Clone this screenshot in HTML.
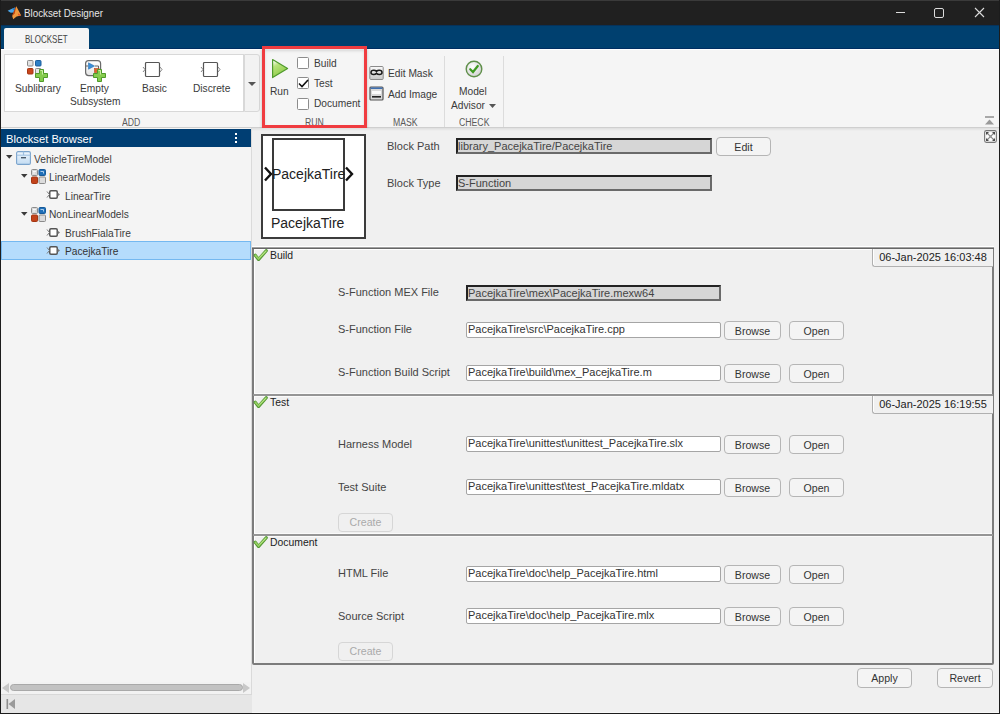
<!DOCTYPE html>
<html><head><meta charset="utf-8">
<style>
*{box-sizing:border-box;margin:0;padding:0}
html,body{width:1000px;height:714px;overflow:hidden;background:#1c1c1c}
body{position:relative;font-family:"Liberation Sans",sans-serif;color:#333}
.a{position:absolute}
.t{position:absolute;white-space:pre;line-height:1}
#title{left:1px;top:0;width:998px;height:25px;background:#202020;border-top:1px solid #3a3a3a}
#tabs{left:1px;top:25px;width:998px;height:24px;background:#00406f;border-top:1px solid #06325a;border-bottom:1px solid #002e62}
#tab{left:4px;top:28px;width:85px;height:21px;background:#f5f5f5;border-radius:2px 2px 0 0}
#ribbon{left:1px;top:49px;width:998px;height:79px;background:#f5f5f5;border-top:1px solid #fff;border-bottom:1px solid #cfcfcf}
.rl{font-size:10px;color:#5a5a5a;transform:scaleX(0.87);transform-origin:0 0}
.rt{font-size:10.2px;color:#3a3a3a}
#addpanel{left:4px;top:54px;width:240px;height:58px;background:#fff;border:1px solid #d8d8d8}
#adddrop{left:244px;top:54px;width:16px;height:58px;background:#f2f2f2;border:1px solid #d8d8d8;border-radius:0 3px 3px 0}
.vsep{width:1px;background:#dcdcdc}
#redbox{left:262px;top:46px;width:105px;height:82px;border:3px solid #f03c40;box-shadow:inset 0 2px 3px rgba(0,0,0,0.12),0 3px 3px rgba(0,0,0,0.22)}
.cb{width:12px;height:12px;background:#fff;border:1px solid #8c8c8c;border-radius:1.5px}
#browser{left:1px;top:128px;width:251px;height:585px;background:#f4f4f4;border-right:1px solid #dadada}
#bhdr{left:1px;top:129px;width:250px;height:18px;background:#003e73;color:#fff}
#right{left:252px;top:128px;width:747px;height:585px;background:#f0f0f0;border-bottom:1px solid #f8f8f8}
.lbl{font-size:11px;color:#444}
.fld{height:16px;background:#fff;border:1px solid #a5a5a5;border-radius:2px;font-size:11px;line-height:12px;color:#333;padding:0 0 0 1px;white-space:pre;overflow:hidden}
.fldg{height:16px;background:#d6d6d6;border:2px solid #222;border-right-color:#6a6a6a;border-bottom-color:#6a6a6a;font-size:11px;line-height:12px;color:#444;padding:0 0 0 0;white-space:pre;overflow:hidden}
.btn{height:19px;background:#f4f4f4;border:1px solid #b5b5b5;border-radius:4px;font-size:10.6px;color:#333;text-align:center;padding-top:3px}
.sec{border:2px solid #8c8c8c;border-right-width:2px;}
.ts{height:18px;background:#f0f0f0;border:1px solid #b0b0b0;border-right:none;border-top:none;border-radius:0 0 0 3px;box-shadow:inset 1px 0 0 #fff;font-size:11px;color:#222;text-align:center;padding-top:2px}
</style></head><body>

<!-- title bar -->
<div id="title" class="a"></div>
<svg class="a" style="left:4px;top:3px" width="20" height="20" viewBox="0 0 20 20">
  <path d="M3.6 7.8L8 5.8L11 4.6L9.5 9.6L6.8 9.8Z" fill="#4ca6e8"/>
  <path d="M8 5.8L11 4.6L10 7.5Z" fill="#2a78c0"/>
  <path d="M12.3 3.2L17.2 12.6L12.6 13.6L9.2 16.2L8.2 13L9.5 9.6Z" fill="#f0983c"/>
  <path d="M12.3 3.2L9.5 9.6L8.2 13L10.6 10.5Z" fill="#b83a12"/>
  <path d="M13.8 10.2L17.2 12.6L14.5 12.5Z" fill="#e24a2a"/>
</svg>
<div class="t" style="left:24px;top:8px;font-size:11px;color:#e6e6e6;transform:scaleX(0.89);transform-origin:0 0">Blockset Designer</div>
<div class="a" style="left:896px;top:12px;width:9px;height:1px;background:#dcdcdc"></div>
<div class="a" style="left:934px;top:8px;width:10px;height:10px;border:1px solid #dcdcdc;border-radius:2px"></div>
<svg class="a" style="left:974px;top:7px" width="11" height="11" viewBox="0 0 11 11"><path d="M1 1L10 10M10 1L1 10" stroke="#dcdcdc" stroke-width="1.1"/></svg>

<!-- tabs -->
<div id="tabs" class="a"></div>
<div id="tab" class="a"></div>
<div class="t" style="left:25px;top:34px;font-size:10.5px;color:#444;transform:scaleX(0.76);transform-origin:0 0">BLOCKSET</div>

<!-- ribbon -->
<div id="ribbon" class="a"></div>
<div id="addpanel" class="a"></div>
<div id="adddrop" class="a"></div>
<svg class="a" style="left:248px;top:82px" width="9" height="5"><path d="M0 0H8L4 4Z" fill="#555"/></svg>

<!-- sublibrary icon -->
<svg class="a" style="left:20px;top:55px" width="90" height="30" viewBox="0 0 90 30">
  <rect x="7.5" y="5.5" width="5.5" height="5.5" rx="0.8" fill="#e2e2e2" stroke="#8a8a8a"/>
  <rect x="15.5" y="5.5" width="5.5" height="5.5" rx="0.8" fill="#2d7fc6" stroke="#1d5f9c"/>
  <rect x="7.5" y="13.5" width="5.5" height="5.5" rx="0.8" fill="#c8461c" stroke="#a63512"/>
  <rect x="15.5" y="13.5" width="5.5" height="5.5" rx="0.8" fill="#e6e6e6" stroke="#8a8a8a"/>
  <path d="M19.5 14.5h4v4h4v4h-4v4h-4v-4h-4v-4h4z" fill="#86cc4e" stroke="#4f9a2a" stroke-width="1"/><path d="M20.5 15.5h2v4" stroke="#d4f0b0" stroke-width="0.9" fill="none"/>
  <defs><linearGradient id="es" x1="0" y1="0" x2="0" y2="1"><stop offset="0" stop-color="#fff"/><stop offset="1" stop-color="#e4e4e4"/></linearGradient></defs>
  <rect x="65.6" y="5.6" width="15" height="15" rx="3" fill="url(#es)" stroke="#6a6a6a" stroke-width="1.2"/>
  <path d="M68.5 7.8L74.5 11L68.5 14.2Z" fill="#3b8fd8" stroke="#2a6fb0" stroke-width="0.6"/>
  <path d="M66 11h2M75 11h3.5v3" fill="none" stroke="#555" stroke-width="0.9"/>
  <rect x="74.5" y="13.5" width="4.5" height="4" fill="#e0622c" stroke="#b84a1a" stroke-width="0.6"/>
  <path d="M77.5 14.5h4v4h4v4h-4v4h-4v-4h-4v-4h4z" fill="#86cc4e" stroke="#4f9a2a" stroke-width="1"/><path d="M78.5 15.5h2v4" stroke="#d4f0b0" stroke-width="0.9" fill="none"/>
</svg>
<div class="t rt" style="left:15px;top:84px">Sublibrary</div>
<div class="t rt" style="left:80px;top:84px">Empty</div>
<div class="t rt" style="left:70px;top:97px">Subsystem</div>
<!-- basic -->
<svg class="a" style="left:141px;top:61px" width="22" height="17" viewBox="0 0 22 17">
  <rect x="4.5" y="1.5" width="14" height="14" rx="1" fill="#fff" stroke="#555" stroke-width="1.2"/>
  <path d="M2 6L4 8.5L2 11M19 6L21 8.5L19 11" fill="none" stroke="#777" stroke-width="0.9"/>
</svg>
<div class="t rt" style="left:142px;top:84px">Basic</div>
<svg class="a" style="left:199px;top:61px" width="22" height="17" viewBox="0 0 22 17">
  <rect x="4.5" y="1.5" width="14" height="14" rx="1" fill="#fff" stroke="#555" stroke-width="1.2"/>
  <path d="M2 6L4 8.5L2 11M19 6L21 8.5L19 11" fill="none" stroke="#777" stroke-width="0.9"/>
</svg>
<div class="t rt" style="left:193px;top:84px">Discrete</div>
<div class="t rl" style="left:122px;top:118px">ADD</div>

<!-- RUN section -->
<svg class="a" style="left:271px;top:58px" width="19" height="22" viewBox="0 0 19 22">
  <defs><linearGradient id="gr" x1="0.1" y1="0.1" x2="0.5" y2="0.9"><stop offset="0" stop-color="#f4f8e8"/><stop offset="0.3" stop-color="#b8e27a"/><stop offset="1" stop-color="#8fcc4a"/></linearGradient></defs>
  <path d="M1.6 1.6 L16.6 10.5 L1.6 19.6Z" fill="url(#gr)" stroke="#4f9a2c" stroke-width="1.2" stroke-linejoin="round"/>
</svg>
<div class="t rt" style="left:270px;top:87px">Run</div>
<div class="a cb" style="left:297px;top:57px"></div>
<div class="a cb" style="left:297px;top:77px"></div>
<svg class="a" style="left:298px;top:79px" width="11" height="9"><path d="M1 4.5L4 7.5L10 1" fill="none" stroke="#111" stroke-width="1.6"/></svg>
<div class="a cb" style="left:297px;top:98px"></div>
<div class="t rt" style="left:314px;top:59px">Build</div>
<div class="t rt" style="left:314px;top:79px">Test</div>
<div class="t rt" style="left:314px;top:99px">Document</div>
<div class="t rl" style="left:305px;top:118px">RUN</div>
<div id="redbox" class="a"></div>

<!-- MASK -->
<svg class="a" style="left:369px;top:66px" width="15" height="14" viewBox="0 0 15 14">
  <defs><linearGradient id="em" x1="0" y1="0" x2="0" y2="1"><stop offset="0" stop-color="#fafafa"/><stop offset="1" stop-color="#c8c8c8"/></linearGradient></defs>
  <rect x="0.8" y="0.5" width="13.4" height="13" rx="1" fill="url(#em)" stroke="#8a8a8a" stroke-width="1"/>
  <path d="M2 6.5Q2 4.3 4.8 4.3Q6.4 4.3 7.5 5.4Q8.6 4.3 10.2 4.3Q13 4.3 13 6.5Q13 8.5 10.4 8.5Q8.6 8.5 7.5 7.4Q6.4 8.5 4.6 8.5Q2 8.5 2 6.5Z" fill="none" stroke="#1a1a1a" stroke-width="1.5"/>
</svg>
<div class="t rt" style="left:388px;top:69px">Edit Mask</div>
<svg class="a" style="left:369px;top:86px" width="15" height="15" viewBox="0 0 15 15">
  <rect x="1" y="1" width="13" height="13" rx="1" fill="#d8d8d8" stroke="#555" stroke-width="1.2"/>
  <rect x="1.5" y="1.4" width="12" height="1.6" fill="#3f6fb0"/>
  <rect x="3" y="5" width="9" height="3" fill="#fafafa"/>
  <rect x="3" y="10" width="9" height="1.6" fill="#222"/>
</svg>
<div class="t rt" style="left:388px;top:90px">Add Image</div>
<div class="t rl" style="left:393px;top:118px">MASK</div>
<div class="a vsep" style="left:444px;top:56px;height:71px"></div>

<!-- CHECK -->
<svg class="a" style="left:465px;top:60px" width="18" height="18" viewBox="0 0 18 18">
  <defs><radialGradient id="ma" cx="0.4" cy="0.35" r="0.7"><stop offset="0" stop-color="#ffffff"/><stop offset="1" stop-color="#cfcfcf"/></radialGradient></defs>
  <circle cx="9" cy="9" r="7.8" fill="url(#ma)" stroke="#5f8f4a" stroke-width="1.4"/>
  <path d="M5.2 9.2L8 12L12.8 6" fill="none" stroke="#3f9a22" stroke-width="2.2" stroke-linecap="round"/>
</svg>
<div class="t rt" style="left:459px;top:87px">Model</div>
<div class="t rt" style="left:451px;top:101px">Advisor</div>
<svg class="a" style="left:489px;top:104px" width="8" height="5"><path d="M0 0H7L3.5 4Z" fill="#555"/></svg>
<div class="t rl" style="left:459px;top:118px">CHECK</div>
<div class="a vsep" style="left:503px;top:56px;height:71px"></div>

<!-- collapse ribbon -->
<div class="a" style="left:985px;top:116px;width:9px;height:2px;background:#a8a8a8"></div>
<svg class="a" style="left:985px;top:119px" width="10" height="6"><path d="M0 5.5L4.5 0.5L9 5.5Z" fill="#9a9a9a"/></svg>

<!-- browser -->
<div id="browser" class="a"></div>
<div id="bhdr" class="a"></div>
<div class="t" style="left:6px;top:134px;font-size:11.2px;color:#fff">Blockset Browser</div>
<div class="a" style="left:235px;top:133px;width:2px;height:2px;background:#fff"></div>
<div class="a" style="left:235px;top:137px;width:2px;height:2px;background:#fff"></div>
<div class="a" style="left:235px;top:141px;width:2px;height:2px;background:#fff"></div>

<!-- tree -->
<svg class="a" style="left:6px;top:155px" width="7" height="4" viewBox="0 0 7 4"><path d="M0 0H6.5L3.25 3.8Z" fill="#3a3a3a"/></svg>
<svg class="a" style="left:16px;top:151px" width="15" height="14" viewBox="0 0 15 14">
  <defs><linearGradient id="bx" x1="0" y1="0" x2="0" y2="1"><stop offset="0" stop-color="#eef6fd"/><stop offset="1" stop-color="#c3dcf2"/></linearGradient></defs>
  <rect x="0.6" y="0.6" width="13.8" height="12.8" rx="1.5" fill="url(#bx)" stroke="#7aa3cc" stroke-width="1.1"/>
  <path d="M0.6 4.2H14.4" stroke="#9dbfe0" stroke-width="1"/>
  <path d="M7.5 0.6V4" stroke="#9dbfe0" stroke-width="1.2"/>
  <rect x="5" y="6" width="5" height="1.4" fill="#4a5a6a"/>
</svg>
<div class="t" style="left:34px;top:155px;font-size:10.2px;color:#3c3c3c">VehicleTireModel</div>
<svg class="a" style="left:21px;top:174px" width="7" height="4" viewBox="0 0 7 4"><path d="M0 0H6.5L3.25 3.8Z" fill="#3a3a3a"/></svg>
<svg class="a" style="left:31px;top:169px" width="15" height="15" viewBox="0 0 15 15">
  <rect x="0.5" y="0.5" width="6" height="6" rx="1" fill="#d9d9d9" stroke="#8c8c8c"/>
  <rect x="8" y="0.5" width="6.5" height="6" rx="1" fill="#1f6fb8" stroke="#175a99"/>
  <rect x="0.5" y="8" width="6" height="6.5" rx="1" fill="#c2421a" stroke="#a33612"/>
  <rect x="8" y="8" width="6.5" height="6.5" rx="1" fill="#dcdcdc" stroke="#8c8c8c"/>
  <path d="M2 2.5h3M2 4h2" stroke="#fff" stroke-width="0.8"/>
  <path d="M9.5 2.5h3v2" stroke="#cfe4f7" stroke-width="0.8" fill="none"/>
</svg>
<div class="t" style="left:49px;top:173px;font-size:10.2px;color:#3c3c3c">LinearModels</div>
<svg class="a" style="left:46px;top:190px" width="16" height="10" viewBox="0 0 16 10">
  <rect x="3.75" y="0.75" width="7.5" height="7.5" rx="1.2" fill="#fff" stroke="#555" stroke-width="1.5"/>
  <path d="M1 1.5L3.5 4.5L1 7.5" fill="none" stroke="#777" stroke-width="1"/>
  <path d="M11.5 2.5L14 4.5L11.5 6.5Z" fill="#777"/>
</svg>
<div class="t" style="left:65px;top:192px;font-size:10.2px;color:#3c3c3c">LinearTire</div>
<svg class="a" style="left:21px;top:212px" width="7" height="4" viewBox="0 0 7 4"><path d="M0 0H6.5L3.25 3.8Z" fill="#3a3a3a"/></svg>
<svg class="a" style="left:31px;top:207px" width="15" height="15" viewBox="0 0 15 15">
  <rect x="0.5" y="0.5" width="6" height="6" rx="1" fill="#d9d9d9" stroke="#8c8c8c"/>
  <rect x="8" y="0.5" width="6.5" height="6" rx="1" fill="#1f6fb8" stroke="#175a99"/>
  <rect x="0.5" y="8" width="6" height="6.5" rx="1" fill="#c2421a" stroke="#a33612"/>
  <rect x="8" y="8" width="6.5" height="6.5" rx="1" fill="#dcdcdc" stroke="#8c8c8c"/>
  <path d="M2 2.5h3M2 4h2" stroke="#fff" stroke-width="0.8"/>
  <path d="M9.5 2.5h3v2" stroke="#cfe4f7" stroke-width="0.8" fill="none"/>
</svg>
<div class="t" style="left:49px;top:210px;font-size:10.2px;color:#3c3c3c">NonLinearModels</div>
<svg class="a" style="left:46px;top:228px" width="16" height="10" viewBox="0 0 16 10">
  <rect x="3.75" y="0.75" width="7.5" height="7.5" rx="1.2" fill="#fff" stroke="#555" stroke-width="1.5"/>
  <path d="M1 1.5L3.5 4.5L1 7.5" fill="none" stroke="#777" stroke-width="1"/>
  <path d="M11.5 2.5L14 4.5L11.5 6.5Z" fill="#777"/>
</svg>
<div class="t" style="left:65px;top:229px;font-size:10.2px;color:#3c3c3c">BrushFialaTire</div>
<div class="a" style="left:1px;top:241px;width:250px;height:19px;background:#b5dcfc;border:1px solid #74b8f0"></div>
<svg class="a" style="left:46px;top:246px" width="16" height="10" viewBox="0 0 16 10">
  <rect x="3.75" y="0.75" width="7.5" height="7.5" rx="1.2" fill="#fff" stroke="#555" stroke-width="1.5"/>
  <path d="M1 1.5L3.5 4.5L1 7.5" fill="none" stroke="#777" stroke-width="1"/>
  <path d="M11.5 2.5L14 4.5L11.5 6.5Z" fill="#777"/>
</svg>
<div class="t" style="left:65px;top:247px;font-size:10.2px;color:#333">PacejkaTire</div>

<!-- browser scrollbar / status -->
<div class="a" style="left:1px;top:682px;width:250px;height:12px;background:#f2f2f2"></div>
<svg class="a" style="left:2px;top:683px" width="8" height="10"><path d="M7 0V10L0 5Z" fill="#c8c8c8"/></svg>
<div class="a" style="left:10px;top:684px;width:233px;height:7px;background:#c2c2c2;border-radius:3.5px;border:1px solid #a9a9a9"></div>
<svg class="a" style="left:243px;top:683px" width="8" height="10"><path d="M0 0V10L7 5Z" fill="#c8c8c8"/></svg>
<div class="a" style="left:1px;top:694px;width:251px;height:19px;background:#e6e6e6;border-top:1px solid #d8d8d8"></div>
<svg class="a" style="left:6px;top:698px" width="10" height="12"><rect x="0.5" y="1" width="1.6" height="10" fill="#8e8e8e"/><path d="M9 1V11L2.5 6Z" fill="#9a9a9a"/></svg>

<!-- right pane -->
<div id="right" class="a"></div>
<div class="a" style="left:252px;top:128px;width:747px;height:3px;background:linear-gradient(#dedede,#f0f0f0)"></div>
<!-- expand icon -->
<svg class="a" style="left:984px;top:130px" width="13" height="13" viewBox="0 0 13 13">
  <rect x="0.6" y="0.6" width="11.8" height="11.8" rx="1.8" fill="#f4f4f4" stroke="#777" stroke-width="1.1"/>
  <path d="M2.5 2.5L10.5 10.5M10.5 2.5L2.5 10.5" stroke="#8a8a8a" stroke-width="1.2"/>
  <path d="M2 2h3L2 5zM11 2v3L8 2zM2 11V8l3 3zM11 11H8l3-3z" fill="#4a4a4a"/>
  <path d="M6.5 2.2L8 3.8L6.5 5.3L5 3.8ZM6.5 7.7L8 9.2L6.5 10.8L5 9.2ZM2.2 6.5L3.8 5L5.3 6.5L3.8 8ZM7.7 6.5L9.2 5L10.8 6.5L9.2 8Z" fill="#fff"/>
  <rect x="5.5" y="5.5" width="2" height="2" fill="#999"/>
</svg>

<!-- block preview -->
<div class="a" style="left:261px;top:134px;width:105px;height:105px;background:#fff;border:2px solid #3c3c3c"></div>
<div class="a" style="left:272px;top:138px;width:73px;height:73px;border:2px solid #3a3a3a;background:#fff"></div>
<svg class="a" style="left:263px;top:166px" width="92" height="16" viewBox="0 0 92 16">
  <path d="M2 1.5L8 8L2 14.5" fill="none" stroke="#111" stroke-width="2.4"/>
  <path d="M83 1.5L89 8L83 14.5" fill="none" stroke="#111" stroke-width="2.4"/>
</svg>
<div class="t" style="left:272px;top:167px;font-size:14px;color:#222">PacejkaTire</div>
<div class="t" style="left:271px;top:216px;font-size:14px;color:#222">PacejkaTire</div>

<div class="t lbl" style="left:387px;top:141px">Block Path</div>
<div class="a fldg" style="left:456px;top:138px;width:256px">library_PacejkaTire/PacejkaTire</div>
<div class="a btn" style="left:716px;top:137px;width:55px">Edit</div>
<div class="t lbl" style="left:387px;top:178px">Block Type</div>
<div class="a fldg" style="left:456px;top:175px;width:256px">S-Function</div>

<!-- Build section -->
<div class="a" style="left:252px;top:247px;width:742px;height:418px;border:2px solid #7c7c7c;border-radius:0 0 2px 2px;box-shadow:0 -1px 0 #fff,inset 1px 1px 0 #fff"></div>
<div class="a" style="left:252px;top:247px;width:742px;height:1px;background:#a0a0a0"></div>
<div class="a" style="left:252px;top:248px;width:742px;height:1px;background:#666"></div>
<div class="a" style="left:254px;top:393px;width:738px;height:1px;background:#fafafa"></div>
<div class="a" style="left:253px;top:394px;width:740px;height:2px;background:#959595"></div>
<div class="a" style="left:254px;top:396px;width:738px;height:1px;background:#fafafa"></div>
<div class="a" style="left:254px;top:533px;width:738px;height:1px;background:#fafafa"></div>
<div class="a" style="left:253px;top:534px;width:740px;height:2px;background:#959595"></div>
<div class="a" style="left:254px;top:536px;width:738px;height:1px;background:#fafafa"></div>
<div class="a ts" style="left:872px;top:249px;width:121px">06-Jan-2025 16:03:48</div>
<svg class="a" style="left:253px;top:249px" width="15" height="13" viewBox="0 0 15 13"><path d="M2.2 6.2L5.6 10.4L13.2 1.8" fill="none" stroke="#4f9431" stroke-width="3.2" stroke-linecap="round" stroke-linejoin="round"/><path d="M2.4 6.3L5.6 10L13 2" fill="none" stroke="#95cf62" stroke-width="1.8" stroke-linecap="round" stroke-linejoin="round"/><path d="M6.5 8.2L12.6 2.4" fill="none" stroke="#c4ec92" stroke-width="0.8" stroke-linecap="round"/></svg>
<div class="t lbl" style="left:270px;top:251px;color:#222;font-size:10.4px">Build</div>

<div class="t lbl" style="left:338px;top:287px">S-Function MEX File</div>
<div class="a fldg" style="left:466px;top:285px;width:255px">PacejkaTire\mex\PacejkaTire.mexw64</div>
<div class="t lbl" style="left:338px;top:324px">S-Function File</div>
<div class="a fld" style="left:466px;top:322px;width:255px">PacejkaTire\src\PacejkaTire.cpp</div>
<div class="a btn" style="left:724px;top:321px;width:57px">Browse</div>
<div class="a btn" style="left:789px;top:321px;width:55px">Open</div>
<div class="t lbl" style="left:338px;top:367px">S-Function Build Script</div>
<div class="a fld" style="left:466px;top:365px;width:255px">PacejkaTire\build\mex_PacejkaTire.m</div>
<div class="a btn" style="left:724px;top:364px;width:57px">Browse</div>
<div class="a btn" style="left:789px;top:364px;width:55px">Open</div>

<!-- Test section -->
<div class="a ts" style="left:872px;top:396px;width:121px">06-Jan-2025 16:19:55</div>
<svg class="a" style="left:253px;top:396px" width="15" height="13" viewBox="0 0 15 13"><path d="M2.2 6.2L5.6 10.4L13.2 1.8" fill="none" stroke="#4f9431" stroke-width="3.2" stroke-linecap="round" stroke-linejoin="round"/><path d="M2.4 6.3L5.6 10L13 2" fill="none" stroke="#95cf62" stroke-width="1.8" stroke-linecap="round" stroke-linejoin="round"/><path d="M6.5 8.2L12.6 2.4" fill="none" stroke="#c4ec92" stroke-width="0.8" stroke-linecap="round"/></svg>
<div class="t lbl" style="left:270px;top:398px;color:#222;font-size:10.4px">Test</div>
<div class="t lbl" style="left:338px;top:439px">Harness Model</div>
<div class="a fld" style="left:466px;top:436px;width:255px">PacejkaTire\unittest\unittest_PacejkaTire.slx</div>
<div class="a btn" style="left:724px;top:435px;width:57px">Browse</div>
<div class="a btn" style="left:789px;top:435px;width:55px">Open</div>
<div class="t lbl" style="left:338px;top:482px">Test Suite</div>
<div class="a fld" style="left:466px;top:479px;width:255px">PacejkaTire\unittest\test_PacejkaTire.mldatx</div>
<div class="a btn" style="left:724px;top:478px;width:57px">Browse</div>
<div class="a btn" style="left:789px;top:478px;width:55px">Open</div>
<div class="a btn" style="left:338px;top:513px;width:55px;color:#aaa;border-color:#d6d6d6;background:#f0f0f0;padding-top:2px">Create</div>

<!-- Document section -->
<svg class="a" style="left:253px;top:536px" width="15" height="13" viewBox="0 0 15 13"><path d="M2.2 6.2L5.6 10.4L13.2 1.8" fill="none" stroke="#4f9431" stroke-width="3.2" stroke-linecap="round" stroke-linejoin="round"/><path d="M2.4 6.3L5.6 10L13 2" fill="none" stroke="#95cf62" stroke-width="1.8" stroke-linecap="round" stroke-linejoin="round"/><path d="M6.5 8.2L12.6 2.4" fill="none" stroke="#c4ec92" stroke-width="0.8" stroke-linecap="round"/></svg>
<div class="t lbl" style="left:270px;top:538px;color:#222;font-size:10.4px">Document</div>
<div class="t lbl" style="left:338px;top:568px">HTML File</div>
<div class="a fld" style="left:466px;top:566px;width:255px">PacejkaTire\doc\help_PacejkaTire.html</div>
<div class="a btn" style="left:724px;top:565px;width:57px">Browse</div>
<div class="a btn" style="left:789px;top:565px;width:55px">Open</div>
<div class="t lbl" style="left:338px;top:611px">Source Script</div>
<div class="a fld" style="left:466px;top:608px;width:255px">PacejkaTire\doc\help_PacejkaTire.mlx</div>
<div class="a btn" style="left:724px;top:607px;width:57px">Browse</div>
<div class="a btn" style="left:789px;top:607px;width:55px">Open</div>
<div class="a btn" style="left:338px;top:642px;width:55px;color:#aaa;border-color:#d6d6d6;background:#f0f0f0;padding-top:2px">Create</div>

<div class="a btn" style="left:857px;top:668px;width:55px;height:20px">Apply</div>
<div class="a btn" style="left:937px;top:668px;width:56px;height:20px">Revert</div>

</body></html>
